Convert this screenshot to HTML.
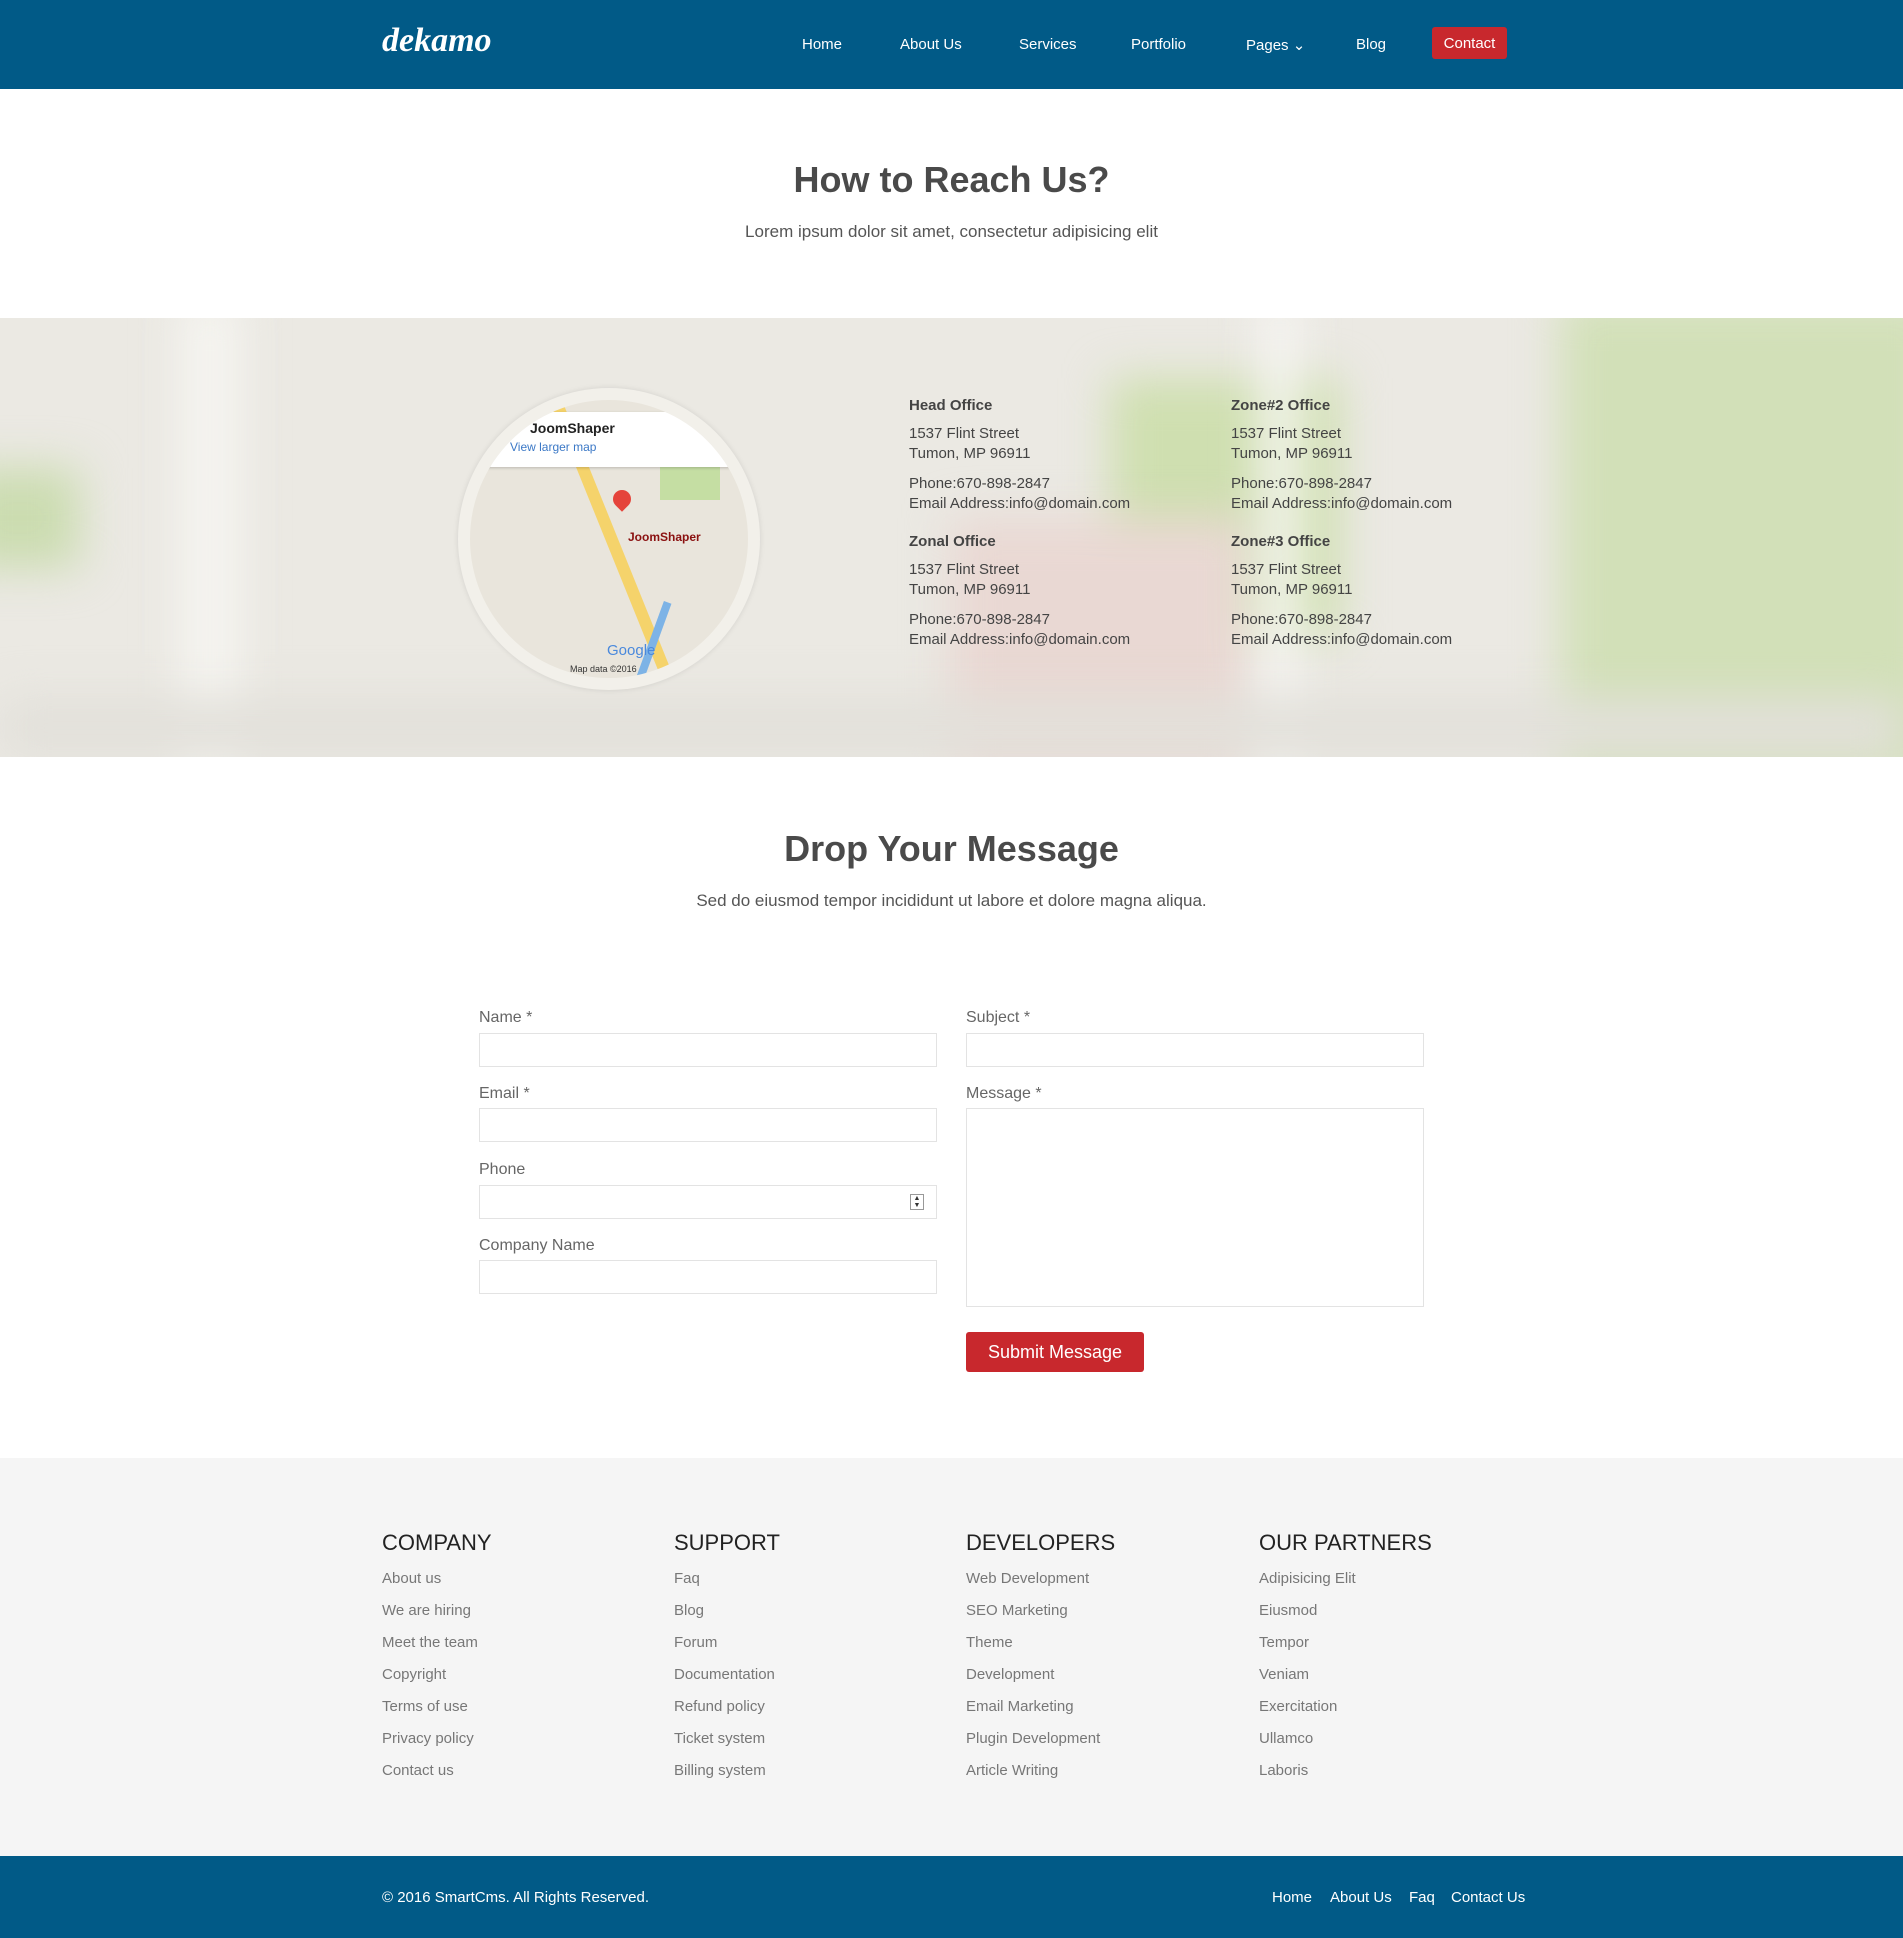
<!DOCTYPE html>
<html><head><meta charset="utf-8"><style>
*{margin:0;padding:0;box-sizing:border-box}
body{width:1903px;height:1938px;font-family:"Liberation Sans",sans-serif;background:#fff;position:relative;overflow:hidden;color:#555}
.a{position:absolute;white-space:nowrap}
header{position:absolute;left:0;top:0;width:1903px;height:89px;background:#015a87}
.nav{color:#fff;font-size:15px}
.btn{left:1432px;top:27px;width:75px;height:32px;background:#c8282d;border-radius:3px;color:#fff;font-size:15px;text-align:center;line-height:33px}
h2{position:absolute;left:0;width:1903px;text-align:center;font-size:36px;color:#4a4a4a;font-weight:bold}
.sub{position:absolute;left:0;width:1903px;text-align:center;font-size:17px;color:#555}
.map{position:absolute;left:0;top:318px;width:1903px;height:439px;overflow:hidden;background:#ebe9e3}
.map .blob{position:absolute;filter:blur(22px)}
.off{font-size:15px;color:#444;line-height:20px}
.off b{display:block;margin-bottom:8px;color:#444}
.off p{margin-top:10px}
label{position:absolute;font-size:16px;color:#666}
.in{position:absolute;border:1px solid #e3e3e3;background:#fff}
.ft{position:absolute;top:1458px;left:0;width:1903px;height:398px;background:#f5f5f5}
.fh{font-size:22px;color:#222;top:1530px}
.fl{font-size:15px;color:#777;line-height:32px;top:1563px}
.bot{position:absolute;top:1856px;left:0;width:1903px;height:82px;background:#015a87}
.bl{color:#fff;font-size:15px;top:1889px}
</style></head><body>
<header></header>
<div class="a" style="left:382px;top:22px;color:#fff;font:italic bold 34px 'Liberation Serif',serif">dekamo</div>
<div class="a nav" style="left:802px;top:36px">Home</div>
<div class="a nav" style="left:900px;top:36px">About Us</div>
<div class="a nav" style="left:1019px;top:36px">Services</div>
<div class="a nav" style="left:1131px;top:36px">Portfolio</div>
<div class="a nav" style="left:1246px;top:36px">Pages &#8964;</div>
<div class="a nav" style="left:1356px;top:36px">Blog</div>
<div class="a btn">Contact</div>

<h2 style="top:159px">How to Reach Us?</h2>
<div class="sub" style="top:222px">Lorem ipsum dolor sit amet, consectetur adipisicing elit</div>

<div class="map">
<div class="blob" style="left:1560px;top:-20px;width:380px;height:480px;background:#d2e0b8"></div>
<div class="blob" style="left:1110px;top:60px;width:230px;height:260px;background:#cfdfb0"></div>
<div class="blob" style="left:950px;top:200px;width:300px;height:250px;background:#e9d8d3"></div>
<div class="blob" style="left:-40px;top:150px;width:120px;height:100px;background:#cbdcb0"></div>
<div class="blob" style="left:180px;top:-20px;width:60px;height:480px;background:#f5f4f0"></div>
<div class="blob" style="left:1260px;top:-20px;width:40px;height:480px;background:#f6f5f2"></div>
<div class="blob" style="left:0;top:380px;width:1903px;height:60px;background:#e2e0da"></div>
<div style="position:absolute;left:458px;top:70px;width:302px;height:302px;border-radius:50%;background:#f2f0ea;box-shadow:0 0 6px rgba(0,0,0,.1)"></div>
<div style="position:absolute;left:470px;top:82px;width:278px;height:278px;border-radius:50%;background:#e9e5dc;overflow:hidden">
 <div style="position:absolute;left:140px;top:-10px;width:12px;height:320px;background:#f5d36b;transform:rotate(-22deg)"></div>
 <div style="position:absolute;left:190px;top:60px;width:60px;height:40px;background:#c5dea3"></div>
 <div style="position:absolute;left:180px;top:200px;width:8px;height:80px;background:#7db3e6;transform:rotate(20deg)"></div>
 <div style="position:absolute;left:0;top:12px;width:260px;height:55px;background:#fff;box-shadow:0 1px 3px rgba(0,0,0,.2)"></div>
 <div class="a" style="left:60px;top:20px;font-size:14px;color:#222;font-weight:bold">JoomShaper</div>
 <div class="a" style="left:40px;top:40px;font-size:12px;color:#3b78c6">View larger map</div>
 <div style="position:absolute;left:143px;top:90px;width:18px;height:18px;border-radius:50% 50% 50% 0;transform:rotate(-45deg);background:#e5443b"></div>
 <div class="a" style="left:158px;top:130px;font-size:12px;color:#8a1010;font-weight:bold">JoomShaper</div>
 <div class="a" style="left:137px;top:242px;font-size:15px;color:#4a89dc">Google</div>
 <div class="a" style="left:100px;top:264px;font-size:9px;color:#333">Map data ©2016</div>
</div>
<div class="a off" style="left:909px;top:78px"><b>Head Office</b>1537 Flint Street<br>Tumon, MP 96911<p>Phone:670-898-2847<br>Email Address:info@domain.com</p></div>
<div class="a off" style="left:1231px;top:78px"><b>Zone#2 Office</b>1537 Flint Street<br>Tumon, MP 96911<p>Phone:670-898-2847<br>Email Address:info@domain.com</p></div>
<div class="a off" style="left:909px;top:214px"><b>Zonal Office</b>1537 Flint Street<br>Tumon, MP 96911<p>Phone:670-898-2847<br>Email Address:info@domain.com</p></div>
<div class="a off" style="left:1231px;top:214px"><b>Zone#3 Office</b>1537 Flint Street<br>Tumon, MP 96911<p>Phone:670-898-2847<br>Email Address:info@domain.com</p></div>
</div>

<h2 style="top:828px">Drop Your Message</h2>
<div class="sub" style="top:891px">Sed do eiusmod tempor incididunt ut labore et dolore magna aliqua.</div>

<label style="left:479px;top:1009px">Name *</label><div class="in" style="left:479px;top:1033px;width:458px;height:34px"></div>
<label style="left:479px;top:1085px">Email *</label><div class="in" style="left:479px;top:1108px;width:458px;height:34px"></div>
<label style="left:479px;top:1161px">Phone</label><div class="in" style="left:479px;top:1185px;width:458px;height:34px"><div style="position:absolute;right:12px;top:8px;width:14px;height:16px;border:1px solid #999;font-size:7px;line-height:7px;text-align:center;color:#333">▲<br>▼</div></div>
<label style="left:479px;top:1237px">Company Name</label><div class="in" style="left:479px;top:1260px;width:458px;height:34px"></div>
<label style="left:966px;top:1009px">Subject *</label><div class="in" style="left:966px;top:1033px;width:458px;height:34px"></div>
<label style="left:966px;top:1085px">Message *</label><div class="in" style="left:966px;top:1108px;width:458px;height:199px"></div>
<div class="a" style="left:966px;top:1332px;width:178px;height:40px;background:#c8282d;border-radius:3px;color:#fff;font-size:18px;text-align:center;line-height:41px">Submit Message</div>

<div class="ft"></div>
<div class="a fh" style="left:382px">COMPANY</div>
<div class="a fh" style="left:674px">SUPPORT</div>
<div class="a fh" style="left:966px">DEVELOPERS</div>
<div class="a fh" style="left:1259px">OUR PARTNERS</div>
<div class="a fl" style="left:382px">About us<br>We are hiring<br>Meet the team<br>Copyright<br>Terms of use<br>Privacy policy<br>Contact us</div>
<div class="a fl" style="left:674px">Faq<br>Blog<br>Forum<br>Documentation<br>Refund policy<br>Ticket system<br>Billing system</div>
<div class="a fl" style="left:966px">Web Development<br>SEO Marketing<br>Theme<br>Development<br>Email Marketing<br>Plugin Development<br>Article Writing</div>
<div class="a fl" style="left:1259px">Adipisicing Elit<br>Eiusmod<br>Tempor<br>Veniam<br>Exercitation<br>Ullamco<br>Laboris</div>

<div class="bot"></div>
<div class="a bl" style="left:382px">© 2016 SmartCms. All Rights Reserved.</div>
<div class="a bl" style="left:1272px">Home</div>
<div class="a bl" style="left:1330px">About Us</div>
<div class="a bl" style="left:1409px">Faq</div>
<div class="a bl" style="left:1451px">Contact Us</div>
</body></html>
